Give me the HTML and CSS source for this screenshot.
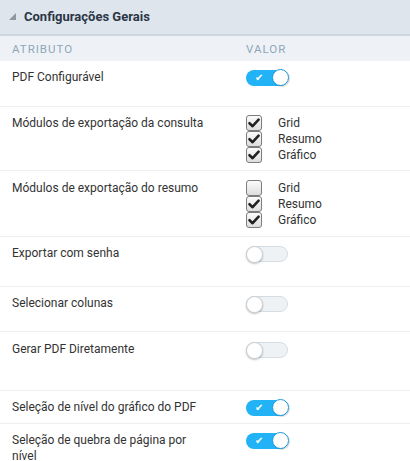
FILE: index.html
```html
<!DOCTYPE html>
<html lang="pt">
<head>
<meta charset="utf-8">
<link rel="stylesheet" href="styles.css">
</head>
<body>
<div class="panel">
  <div class="panel-head">
    <svg class="tri" width="7" height="7" viewBox="0 0 7 7"><polygon points="7,0 7,7 0,7" fill="#8d98a3"/></svg>
    <span class="panel-title">Configurações Gerais</span>
  </div>
  <div class="row col-head">
    <div>ATRIBUTO</div>
    <div>VALOR</div>
  </div>

  <div class="row r1">
    <div class="label">PDF Configurável</div>
    <div class="value"><span class="toggle on"><span class="tick">✔</span><span class="knob"></span></span></div>
  </div>

  <div class="row r2">
    <div class="label">Módulos de exportação da consulta</div>
    <div class="value checks">
      <label class="check"><span class="box checked"><svg viewBox="0 0 16 16"><path d="M3.5 8.2 L6.6 11.2 L12.6 4.6" fill="none" stroke="#222" stroke-width="2.6" stroke-linecap="round" stroke-linejoin="round"/></svg></span>Grid</label>
      <label class="check"><span class="box checked"><svg viewBox="0 0 16 16"><path d="M3.5 8.2 L6.6 11.2 L12.6 4.6" fill="none" stroke="#222" stroke-width="2.6" stroke-linecap="round" stroke-linejoin="round"/></svg></span>Resumo</label>
      <label class="check"><span class="box checked"><svg viewBox="0 0 16 16"><path d="M3.5 8.2 L6.6 11.2 L12.6 4.6" fill="none" stroke="#222" stroke-width="2.6" stroke-linecap="round" stroke-linejoin="round"/></svg></span>Gráfico</label>
    </div>
  </div>

  <div class="row r3">
    <div class="label">Módulos de exportação do resumo</div>
    <div class="value checks">
      <label class="check"><span class="box"></span>Grid</label>
      <label class="check"><span class="box checked"><svg viewBox="0 0 16 16"><path d="M3.5 8.2 L6.6 11.2 L12.6 4.6" fill="none" stroke="#222" stroke-width="2.6" stroke-linecap="round" stroke-linejoin="round"/></svg></span>Resumo</label>
      <label class="check"><span class="box checked"><svg viewBox="0 0 16 16"><path d="M3.5 8.2 L6.6 11.2 L12.6 4.6" fill="none" stroke="#222" stroke-width="2.6" stroke-linecap="round" stroke-linejoin="round"/></svg></span>Gráfico</label>
    </div>
  </div>

  <div class="row r4">
    <div class="label">Exportar com senha</div>
    <div class="value"><span class="toggle off"><span class="knob"></span></span></div>
  </div>

  <div class="row r5">
    <div class="label">Selecionar colunas</div>
    <div class="value"><span class="toggle off"><span class="knob"></span></span></div>
  </div>

  <div class="row r6">
    <div class="label">Gerar PDF Diretamente</div>
    <div class="value"><span class="toggle off"><span class="knob"></span></span></div>
  </div>

  <div class="row r7">
    <div class="label">Seleção de nível do gráfico do PDF</div>
    <div class="value"><span class="toggle on"><span class="tick">✔</span><span class="knob"></span></span></div>
  </div>

  <div class="row r8">
    <div class="label">Seleção de quebra de página por nível</div>
    <div class="value"><span class="toggle on"><span class="tick">✔</span><span class="knob"></span></span></div>
  </div>
</div>
</body>
</html>
```

FILE: styles.css
```css
* { box-sizing: border-box; }
html, body { margin: 0; padding: 0; background: #fff; }
body {
  font-family: Roboto, "Liberation Sans", Arial, sans-serif;
  font-size: 12px;
  line-height: 16px;
  color: #333;
}
.panel { width: 410px; }
.panel-head {
  height: 36px;
  background: #dee5ec;
  border-bottom: 2px solid #cdd8de;
  display: flex;
  align-items: center;
  padding-left: 9px;
}
.tri { margin-right: 8px; margin-top: -1px; }
.panel-title {
  font-weight: bold;
  font-size: 13px;
  color: #2b3645;
}
.row {
  display: grid;
  grid-template-columns: 200px 1fr;
  column-gap: 34px;
  align-items: start;
  padding: 8px 12px;
  border-bottom: 1px solid #eceff2;
}
.col-head {
  background: #eef2f6;
  border-bottom: none;
  height: 25px;
  padding-top: 5px;
  padding-bottom: 0;
  font-size: 11.5px;
  letter-spacing: 1px;
  color: #8ea6ba;
}
.r1 { height: 46px; }
.r2 { height: 64px; }
.r3 { height: 66px; padding-top: 9px; }
.r4 { height: 50px; }
.r5 { height: 45px; }
.r6 { height: 59px; padding-top: 9px; }
.r7 { height: 33px; }
.r8 { padding-bottom: 0; border-bottom: none; }

.value { display: flex; align-items: flex-start; }
.checks { flex-direction: column; }
.check {
  display: flex;
  align-items: center;
  height: 16px;
  color: #333;
}
.box {
  width: 16px;
  height: 16px;
  border: 1px solid #7c7c7c;
  border-radius: 3px;
  background: linear-gradient(#fbfbfb, #dedede);
  margin-right: 16px;
  display: inline-block;
  position: relative;
}
.box svg { position: absolute; left: -1px; top: -1px; width: 16px; height: 16px; }

.toggle {
  position: relative;
  display: inline-block;
  width: 42px;
  height: 16px;
  border-radius: 8px;
  margin-top: 1px;
}
.toggle.on { background: #22b2f6; }
.toggle.off { background: #eef2f5; border: 1px solid #d5dde3; }
.tick {
  position: absolute;
  left: 9px;
  top: 0;
  font-size: 10px;
  line-height: 16px;
  color: #fff;
}
.knob {
  position: absolute;
  width: 17px;
  height: 17px;
  border-radius: 50%;
  background: #fff;
  top: -1px;
}
.toggle.on .knob { right: -1px; border: 1px solid #1c9ad8; box-shadow: 1px 1px 1px rgba(0,0,0,0.15); }
.toggle.off .knob { left: -1px; top: -1px; border: 1px solid #c9d0d6; box-shadow: 0 1px 2px rgba(0,0,0,0.25); }
```
